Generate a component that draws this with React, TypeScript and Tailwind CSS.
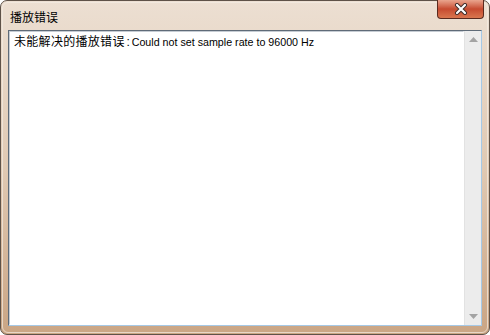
export default function App() {
  return (
    <div className="w-[490px] h-[335px] bg-white">
      <div className="relative w-full h-full rounded-[7px] border border-[#5e5248] bg-gradient-to-b from-[#ecdfd2] via-[#e0c9b3] to-[#caa584] p-px">
        <div className="flex h-full flex-col rounded-[6px] border border-[#f4ece4]/70 px-[5px] pb-[6px]">
          <div className="h-[27px] flex items-center pl-[2px] text-[12px] text-black" style={{ fontFamily: '"Noto Sans CJK SC", sans-serif' }}>
            播放错误
          </div>
          <div className="flex flex-1 border border-t-[#5f6b78] border-l-[#5f6b78] border-b-[#a6c9e6] border-r-[#a6c9e6] bg-white">
            <div className="flex-1 border border-t-[#c6ccd3] border-l-[#c6ccd3] border-b-white border-r-white px-[4px] pt-px">
              <p className="text-[12px] leading-[16px] text-black whitespace-nowrap" style={{ fontFamily: '"Liberation Sans", "Noto Sans CJK SC", sans-serif' }}>
                <span className="tracking-[0.3px]" style={{ fontFamily: '"Noto Sans CJK SC", sans-serif' }}>未能解决的播放错误</span>
                <span className="inline-block w-[7px] text-center" style={{ fontFamily: '"Liberation Sans", sans-serif' }}>:</span>
                <span className="text-[10.7px]">Could not set sample rate to 96000 Hz</span>
              </p>
            </div>
            <div className="w-[17px] flex flex-col justify-between bg-[#ececec] border-l border-[#e2e2e2] py-[6px] items-center">
              <svg width="9" height="5" viewBox="0 0 9 5">
                <path d="M4.5 0L9 5H0Z" fill="#a3a3a3" />
              </svg>
              <svg width="9" height="5" viewBox="0 0 9 5">
                <path d="M0 0H9L4.5 5Z" fill="#a3a3a3" />
              </svg>
            </div>
          </div>
        </div>
        <div className="absolute top-[-1px] right-[5px] w-[47px] h-[19px] rounded-b-[4px] border border-t-0 border-[#5a2a1f] bg-gradient-to-b from-[#e9a48e] via-[#c64a30] to-[#d9764f] flex items-center justify-center">
          <svg width="16" height="12" viewBox="0 0 16 12">
            <path d="M4 2L12 10M12 2L4 10" stroke="#3b2a28" strokeWidth="4" strokeLinecap="round" fill="none" />
            <path d="M4 2L12 10M12 2L4 10" stroke="#ffffff" strokeWidth="2.2" strokeLinecap="round" fill="none" />
          </svg>
        </div>
      </div>
    </div>
  );
}
